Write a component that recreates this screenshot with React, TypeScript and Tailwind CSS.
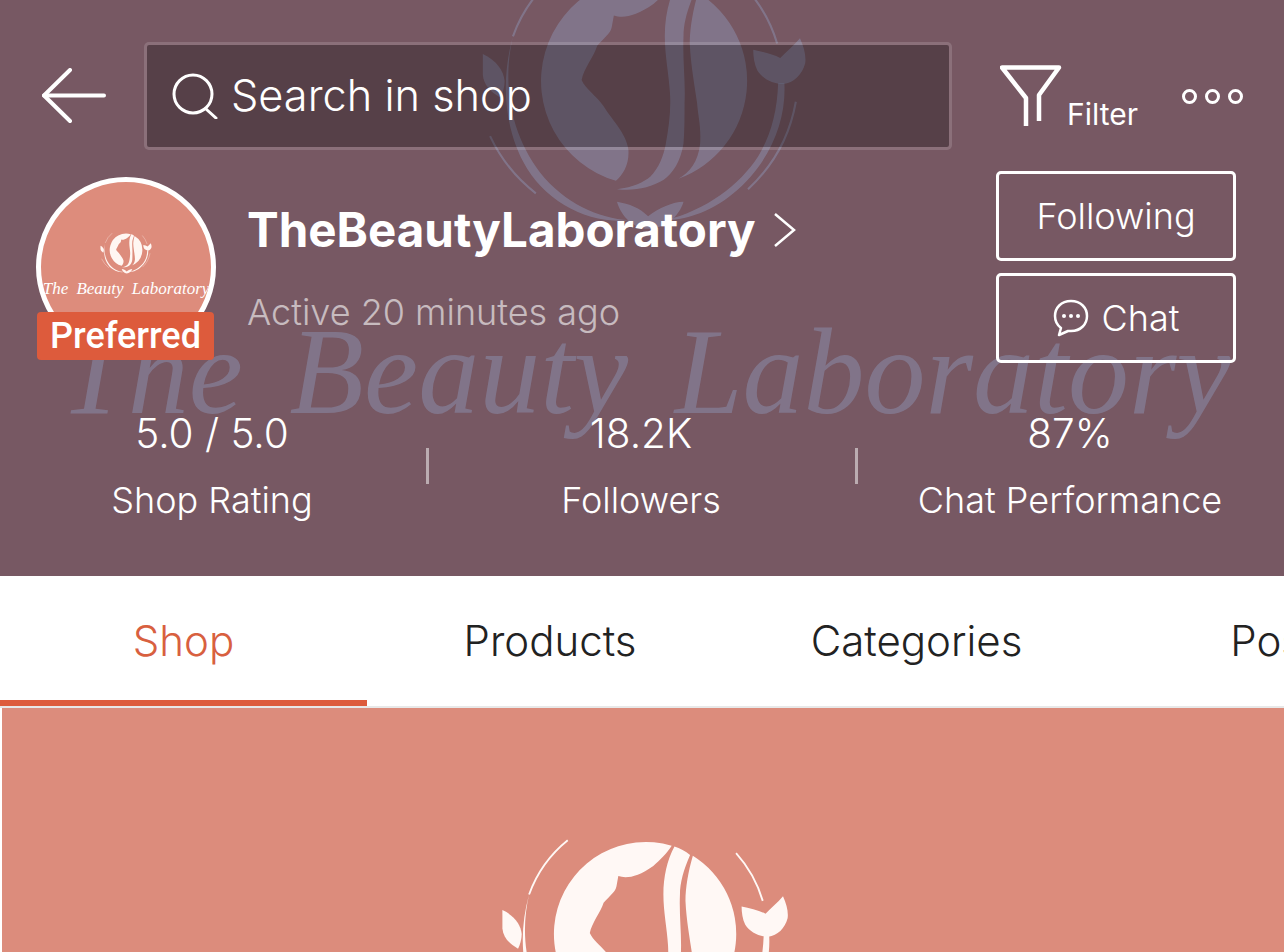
import React from 'react';

const Logo: React.FC<{ className?: string; fill: string }> = ({ className, fill }) => (
  <svg viewBox="-170 -150 340 300" className={className} fill={fill}>
    {/* face side of the disc */}
    <path d="M29 -96 A100 100 0 1 0 -27 96 C-20 90 -14 80 -15 66 C-17 50 -32 36 -39 24 C-46 14 -56 8 -60 -1 C-58 -12 -48 -24 -45 -34 C-38 -42 -32 -46 -31 -52 L-29 -63 C-20 -60 -8 -62 9 -74 C16 -80 24 -88 29 -96 Z" />
    {/* hair strands */}
    <path d="M32 -95 C38 -93 44 -90 49 -86 C42 -70 38 -56 38 -43 C37 -20 40 0 39 21 C39 35 39 48 38 60 C35 78 28 88 19 95 C6 103 -10 106 -26 104 C-10 102 0 97 6 92 C14 84 19 72 21 60 C24 44 26 28 25 12 C24 -6 20 -24 20 -43 C20 -62 24 -80 32 -95 Z" />
    <path d="M52 -85 A100 100 0 0 1 33 94 C44 88 52 78 54 60 C55 44 52 34 51 21 C49 6 45 -14 44 -36 C44 -50 47 -68 52 -85 Z" />
    {/* leaf and tulip */}
    <path d="M-155 -26 C-142 -20 -135 -10 -134 0 C-134 6 -136 12 -138 16 C-148 10 -154 4 -155 -6 Z" />
    <path d="M105 -30 C114 -28 124 -26 131 -22 C137 -28 144 -34 150 -41 C154 -32 156 -24 155 -17 C152 -6 144 2 134 3 C124 3 114 -2 109 -10 C106 -16 105 -24 105 -30 Z" />
    {/* swoosh ring */}
    <path d="M129 2 L135 2 C137 40 120 80 86 108 C62 128 36 134 20 134 C60 124 92 100 110 72 C122 52 128 30 129 2 Z" />
    <path d="M-126 -43 C-136 0 -130 48 -100 88 C-76 118 -44 132 -14 134 C-54 138 -96 116 -116 78 C-134 44 -138 0 -126 -43 Z" />
    {/* tulip at the foot */}
    <path d="M-26 116 C-14 118 -4 122 4 130 C14 122 28 116 38 116 C34 130 20 142 4 142 C-10 142 -22 130 -26 116 Z" />
    {/* thin outer arcs */}
    <path d="M-126 -43 A134 134 0 0 1 -84 -102" fill="none" stroke={fill} strokeWidth="2" />
    <path d="M99 -88 A134 134 0 0 1 128 -36" fill="none" stroke={fill} strokeWidth="2" />
    <path d="M-148 53 A150 150 0 0 0 -104 108" fill="none" stroke={fill} strokeWidth="2" />
    <path d="M146 20 A150 150 0 0 1 100 104" fill="none" stroke={fill} strokeWidth="2" />
  </svg>
);

const Stat: React.FC<{ value: string; label: string }> = ({ value, label }) => (
  <div className="w-[424px] flex flex-col items-center text-white">
    <span className="text-[40.500px] leading-[50px] font-light">{value}</span>
    <span className="text-[36px] leading-[44px] font-light mt-[19px]">{label}</span>
  </div>
);

const App: React.FC = () => {
  return (
    <div className="w-[1284px] h-[952px] overflow-hidden bg-white font-['Inter','Liberation_Sans',sans-serif]">
      <div className="relative h-[576px] bg-[#775863] overflow-hidden">
        {/* watermark */}
        <Logo className="absolute left-[467px] top-[-75px] w-[354px] h-[312px]" fill="rgba(138,140,170,0.55)" />
        <span className="absolute left-[60px] top-[304px] whitespace-nowrap italic text-[122px] leading-[136px] [word-spacing:16px] text-[#8a8caa]/55 font-['Liberation_Serif',serif]">
          The Beauty Laboratory
        </span>

        <div className="relative">
          {/* top bar */}
          <div className="flex items-center pt-[42px] pl-[42px]">
            <svg width="64" height="56" viewBox="0 0 64 56" fill="none" stroke="white" strokeWidth="4" strokeLinecap="round" strokeLinejoin="round" className="shrink-0">
              <path d="M62 27.500H2" />
              <path d="M28 2 L2 27.500 L28 53" />
            </svg>
            <div className="ml-[38px] w-[808px] h-[108px] rounded-[5px] bg-black/27 bg-clip-padding border-[3px] border-white/15 flex items-center pl-[25px]">
              <svg width="46" height="46" viewBox="0 0 46 46" fill="none" stroke="white" strokeWidth="3" strokeLinecap="round">
                <circle cx="21" cy="21" r="19" />
                <path d="M34 36 L44 45" />
              </svg>
              <span className="ml-[13px] text-[43.300px] leading-none font-light text-white">Search in shop</span>
            </div>
            <div className="ml-[48px] relative w-[140px] h-[62px]">
              <svg width="62" height="62" viewBox="0 0 62 62" fill="none" stroke="white" strokeWidth="4.500" strokeLinejoin="round">
                <path d="M26 61 V33 L2 2.500 H59 L39 30 V56" />
              </svg>
              <span className="absolute left-[67px] top-[32px] text-[30px] leading-[34px] font-normal text-white">Filter</span>
            </div>
            <div className="ml-[42px] flex gap-[8px]">
              <span className="w-[15px] h-[15px] rounded-full border-[3px] border-white" />
              <span className="w-[15px] h-[15px] rounded-full border-[3px] border-white" />
              <span className="w-[15px] h-[15px] rounded-full border-[3px] border-white" />
            </div>
          </div>

          {/* shop row */}
          <div className="flex items-start pl-[36px] pr-[48px] mt-[21px]">
            <div className="relative w-[180px] h-[191px] mt-[6px] shrink-0">
              <div className="w-[180px] h-[180px] rounded-full border-[5px] border-white bg-[#dd8c7c] overflow-hidden flex flex-col items-center">
                <Logo className="w-[56px] h-[50px] mt-[43px] shrink-0" fill="#fff6f2" />
                <span className="mt-[3px] whitespace-nowrap italic text-[17px] leading-[22px] [word-spacing:4px] text-white font-['Liberation_Serif',serif]">
                  The Beauty Laboratory
                </span>
              </div>
              <div className="absolute left-[1px] top-[135px] w-[177px] h-[48px] rounded-[4px] bg-[#dd5b3c] flex items-center justify-center text-[36px] leading-none font-medium text-white font-['Roboto',sans-serif]">
                Preferred
              </div>
            </div>
            <div className="ml-[31px] pt-[31px] flex-1">
              <div className="flex items-center h-[56px]">
                <span className="text-[47.500px] leading-[56px] font-bold text-white">TheBeautyLaboratory</span>
                <svg width="24" height="36" viewBox="0 0 24 36" fill="none" stroke="white" strokeWidth="2.500" className="ml-[17px]">
                  <path d="M2 2 L21 18 L2 34" />
                </svg>
              </div>
              <div className="mt-[33px] text-[36px] leading-[42px] font-light text-white/60">Active 20 minutes ago</div>
            </div>
            <div className="flex flex-col gap-[12px] shrink-0">
              <div className="w-[240px] h-[90px] rounded-[5px] border-[3px] border-white flex items-center justify-center text-[36px] leading-none font-light text-white">
                Following
              </div>
              <div className="w-[240px] h-[90px] rounded-[5px] border-[3px] border-white flex items-center justify-center gap-[13px] text-[36px] leading-none font-light text-white">
                <svg width="36" height="38" viewBox="0 0 36 38" fill="none" stroke="white" strokeWidth="2.500" strokeLinejoin="round">
                  <path d="M18 2 C8 2 2 9 2 17 C2 22 4 26 8 29 L6 36 L15 32 C16 32 17 32 18 32 C28 32 34 25 34 17 C34 9 28 2 18 2 Z" />
                  <circle cx="11" cy="17" r="2" fill="white" stroke="none" />
                  <circle cx="18" cy="17" r="2" fill="white" stroke="none" />
                  <circle cx="25" cy="17" r="2" fill="white" stroke="none" />
                </svg>
                Chat
              </div>
            </div>
          </div>

          {/* stats */}
          <div className="flex items-center mt-[41px]">
            <Stat value="5.0 / 5.0" label="Shop Rating" />
            <span className="ml-[2px] w-[3px] h-[36px] bg-white/50 shrink-0" />
            <Stat value="18.2K" label="Followers" />
            <span className="ml-[2px] w-[3px] h-[36px] bg-white/50 shrink-0" />
            <Stat value="87%" label="Chat Performance" />
          </div>
        </div>
      </div>

      {/* tabs */}
      <div className="flex h-[132px] border-b-[2px] border-[#e8e8e8] overflow-hidden">
        <div className="w-[367px] h-[130px] pt-[4px] shrink-0 border-b-[6px] border-[#dd5b3c] flex items-center justify-center text-[42px] font-light text-[#d8603f]">
          Shop
        </div>
        <div className="w-[366px] h-[130px] pb-[2px] shrink-0 flex items-center justify-center text-[42px] font-light text-[#222]">
          Products
        </div>
        <div className="w-[367px] h-[130px] pb-[2px] shrink-0 flex items-center justify-center text-[42px] font-light text-[#222]">
          Categories
        </div>
        <div className="w-[367px] h-[130px] pb-[2px] shrink-0 flex items-center justify-center text-[42px] font-light text-[#222]">
          Posts
        </div>
      </div>

      {/* banner */}
      <div className="ml-[2px] h-[244px] bg-[#dc8c7c] overflow-hidden">
        <Logo className="ml-[486px] mt-[88px] w-[314px] h-[276px]" fill="#fff8f5" />
      </div>
    </div>
  );
};

export default App;
